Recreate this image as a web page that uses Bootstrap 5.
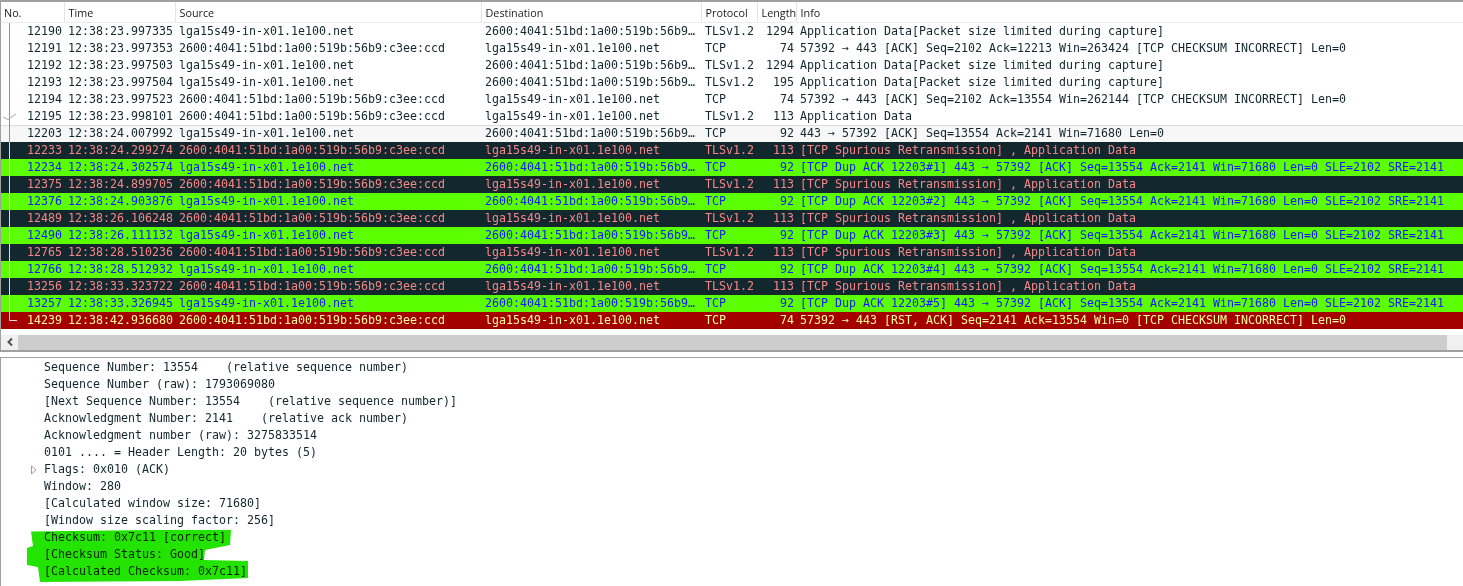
<!DOCTYPE html>
<html lang="en">
<head>
<meta charset="utf-8">
<title>Packet capture</title>
<link href="https://cdn.jsdelivr.net/npm/bootstrap@5.3.0/dist/css/bootstrap.min.css" rel="stylesheet">
<style>
html,body{height:100%;overflow:hidden;background:#fff}
body{font-family:"DejaVu Sans Mono",monospace;font-size:11.63px;color:#12272e}
.pane-list{position:relative;height:352px;border-top:2px solid #a0a0a0;border-left:1px solid #a0a0a0;border-bottom:2px solid #a0a0a0}
.pk-table{table-layout:fixed;border-collapse:collapse;width:1462px}
.pk-table th{height:20px;padding:2px 0 0 4px;font:400 10.8px "Open Sans",sans-serif;color:#1a1a1a;border-right:1px solid #e5e5e5;border-bottom:1px solid #e4ecf4;background:#fff;white-space:nowrap;overflow:hidden}
.pk-table th:first-child{padding-left:3px}
.pk-table td{height:17px;padding:0 0 0 4px;line-height:17px;white-space:pre;overflow:hidden;color:inherit}
.pk-table td.num{text-align:right;padding:0 2px 0 0}
.pk-table tr.r-sel td{background:#f7f7f7;box-shadow:inset 0 1px 0 #dcdcdc}
.pk-table tr.r-dark{background:#12272e;color:#f78787}
.pk-table tr.r-green{background:#5cff00;color:#1414ff}
.pk-table tr.r-red{background:#a40000;color:#fffc9c}
.tree-ov{position:absolute;left:0;top:0;pointer-events:none}
.scroll-h{height:15px;margin-top:6px;background:#f0f0f0}
.scroll-btn{width:17px;color:#505050}
.scroll-thumb{width:1429px;background:#cdcdcd}
.pane-detail{position:relative;margin-top:5px;height:229px;border-top:1px solid #a0a0a0;border-left:1px solid #a0a0a0;padding-top:1px}
.dt-row{height:17px;line-height:17px;padding-left:43px;white-space:pre;position:relative}
.dt-arrow{position:absolute;left:29px;top:4px}
.hl-ov{position:absolute;left:-1px;top:-358px;mix-blend-mode:multiply;pointer-events:none}
</style>
</head>
<body>
<div class="pane-list">
<table class="pk-table">
<colgroup><col style="width:63px"><col style="width:111px"><col style="width:306px"><col style="width:220px"><col style="width:56px"><col style="width:39px"><col style="width:667px"></colgroup>
<thead><tr><th>No.</th><th>Time</th><th>Source</th><th>Destination</th><th>Protocol</th><th>Length</th><th>Info</th></tr></thead>
<tbody>
<tr><td class="num">12190</td><td>12:38:23.997335</td><td>lga15s49-in-x01.1e100.net</td><td>2600:4041:51bd:1a00:519b:56b9…</td><td>TLSv1.2</td><td class="num">1294</td><td>Application Data[Packet size limited during capture]</td></tr>
<tr><td class="num">12191</td><td>12:38:23.997353</td><td>2600:4041:51bd:1a00:519b:56b9:c3ee:ccd</td><td>lga15s49-in-x01.1e100.net</td><td>TCP</td><td class="num">74</td><td>57392 → 443 [ACK] Seq=2102 Ack=12213 Win=263424 [TCP CHECKSUM INCORRECT] Len=0</td></tr>
<tr><td class="num">12192</td><td>12:38:23.997503</td><td>lga15s49-in-x01.1e100.net</td><td>2600:4041:51bd:1a00:519b:56b9…</td><td>TLSv1.2</td><td class="num">1294</td><td>Application Data[Packet size limited during capture]</td></tr>
<tr><td class="num">12193</td><td>12:38:23.997504</td><td>lga15s49-in-x01.1e100.net</td><td>2600:4041:51bd:1a00:519b:56b9…</td><td>TLSv1.2</td><td class="num">195</td><td>Application Data[Packet size limited during capture]</td></tr>
<tr><td class="num">12194</td><td>12:38:23.997523</td><td>2600:4041:51bd:1a00:519b:56b9:c3ee:ccd</td><td>lga15s49-in-x01.1e100.net</td><td>TCP</td><td class="num">74</td><td>57392 → 443 [ACK] Seq=2102 Ack=13554 Win=262144 [TCP CHECKSUM INCORRECT] Len=0</td></tr>
<tr><td class="num">12195</td><td>12:38:23.998101</td><td>2600:4041:51bd:1a00:519b:56b9:c3ee:ccd</td><td>lga15s49-in-x01.1e100.net</td><td>TLSv1.2</td><td class="num">113</td><td>Application Data</td></tr>
<tr class="r-sel"><td class="num">12203</td><td>12:38:24.007992</td><td>lga15s49-in-x01.1e100.net</td><td>2600:4041:51bd:1a00:519b:56b9…</td><td>TCP</td><td class="num">92</td><td>443 → 57392 [ACK] Seq=13554 Ack=2141 Win=71680 Len=0</td></tr>
<tr class="r-dark"><td class="num">12233</td><td>12:38:24.299274</td><td>2600:4041:51bd:1a00:519b:56b9:c3ee:ccd</td><td>lga15s49-in-x01.1e100.net</td><td>TLSv1.2</td><td class="num">113</td><td>[TCP Spurious Retransmission] , Application Data</td></tr>
<tr class="r-green"><td class="num">12234</td><td>12:38:24.302574</td><td>lga15s49-in-x01.1e100.net</td><td>2600:4041:51bd:1a00:519b:56b9…</td><td>TCP</td><td class="num">92</td><td>[TCP Dup ACK 12203#1] 443 → 57392 [ACK] Seq=13554 Ack=2141 Win=71680 Len=0 SLE=2102 SRE=2141</td></tr>
<tr class="r-dark"><td class="num">12375</td><td>12:38:24.899705</td><td>2600:4041:51bd:1a00:519b:56b9:c3ee:ccd</td><td>lga15s49-in-x01.1e100.net</td><td>TLSv1.2</td><td class="num">113</td><td>[TCP Spurious Retransmission] , Application Data</td></tr>
<tr class="r-green"><td class="num">12376</td><td>12:38:24.903876</td><td>lga15s49-in-x01.1e100.net</td><td>2600:4041:51bd:1a00:519b:56b9…</td><td>TCP</td><td class="num">92</td><td>[TCP Dup ACK 12203#2] 443 → 57392 [ACK] Seq=13554 Ack=2141 Win=71680 Len=0 SLE=2102 SRE=2141</td></tr>
<tr class="r-dark"><td class="num">12489</td><td>12:38:26.106248</td><td>2600:4041:51bd:1a00:519b:56b9:c3ee:ccd</td><td>lga15s49-in-x01.1e100.net</td><td>TLSv1.2</td><td class="num">113</td><td>[TCP Spurious Retransmission] , Application Data</td></tr>
<tr class="r-green"><td class="num">12490</td><td>12:38:26.111132</td><td>lga15s49-in-x01.1e100.net</td><td>2600:4041:51bd:1a00:519b:56b9…</td><td>TCP</td><td class="num">92</td><td>[TCP Dup ACK 12203#3] 443 → 57392 [ACK] Seq=13554 Ack=2141 Win=71680 Len=0 SLE=2102 SRE=2141</td></tr>
<tr class="r-dark"><td class="num">12765</td><td>12:38:28.510236</td><td>2600:4041:51bd:1a00:519b:56b9:c3ee:ccd</td><td>lga15s49-in-x01.1e100.net</td><td>TLSv1.2</td><td class="num">113</td><td>[TCP Spurious Retransmission] , Application Data</td></tr>
<tr class="r-green"><td class="num">12766</td><td>12:38:28.512932</td><td>lga15s49-in-x01.1e100.net</td><td>2600:4041:51bd:1a00:519b:56b9…</td><td>TCP</td><td class="num">92</td><td>[TCP Dup ACK 12203#4] 443 → 57392 [ACK] Seq=13554 Ack=2141 Win=71680 Len=0 SLE=2102 SRE=2141</td></tr>
<tr class="r-dark"><td class="num">13256</td><td>12:38:33.323722</td><td>2600:4041:51bd:1a00:519b:56b9:c3ee:ccd</td><td>lga15s49-in-x01.1e100.net</td><td>TLSv1.2</td><td class="num">113</td><td>[TCP Spurious Retransmission] , Application Data</td></tr>
<tr class="r-green"><td class="num">13257</td><td>12:38:33.326945</td><td>lga15s49-in-x01.1e100.net</td><td>2600:4041:51bd:1a00:519b:56b9…</td><td>TCP</td><td class="num">92</td><td>[TCP Dup ACK 12203#5] 443 → 57392 [ACK] Seq=13554 Ack=2141 Win=71680 Len=0 SLE=2102 SRE=2141</td></tr>
<tr class="r-red"><td class="num">14239</td><td>12:38:42.936680</td><td>2600:4041:51bd:1a00:519b:56b9:c3ee:ccd</td><td>lga15s49-in-x01.1e100.net</td><td>TCP</td><td class="num">74</td><td>57392 → 443 [RST, ACK] Seq=2141 Ack=13554 Win=0 [TCP CHECKSUM INCORRECT] Len=0</td></tr>
</tbody>
</table>
<svg class="tree-ov" width="24" height="330" viewBox="0 0 24 330" aria-hidden="true">
<g transform="translate(-1,-2)" fill="none">
<path d="M9.5 23V142" stroke="#909090"/>
<path d="M9.5 142V320.5H17" stroke="#fff" stroke-opacity=".85"/>
<path d="M3 117l5 2.5 8-5.5" stroke="#a8a8a8"/>
</g>
</svg>
<div class="scroll-h d-flex">
<div class="scroll-btn d-flex align-items-center justify-content-center">
<svg width="8" height="10" viewBox="0 0 8 10" aria-hidden="true"><path d="M6 1.5L2.5 5L6 8.5" fill="none" stroke="#505050" stroke-width="2"/></svg>
</div>
<div class="scroll-thumb"></div>
</div>
</div>
<div class="pane-detail">
<div class="dt-row">Sequence Number: 13554    (relative sequence number)</div>
<div class="dt-row">Sequence Number (raw): 1793069080</div>
<div class="dt-row">[Next Sequence Number: 13554    (relative sequence number)]</div>
<div class="dt-row">Acknowledgment Number: 2141    (relative ack number)</div>
<div class="dt-row">Acknowledgment number (raw): 3275833514</div>
<div class="dt-row">0101 .... = Header Length: 20 bytes (5)</div>
<div class="dt-row"><svg class="dt-arrow" width="7" height="10" viewBox="0 0 7 10" aria-hidden="true"><path d="M1.5 1v8L6 5z" fill="#fff" stroke="#a0a0a0"/></svg>Flags: 0x010 (ACK)</div>
<div class="dt-row">Window: 280</div>
<div class="dt-row">[Calculated window size: 71680]</div>
<div class="dt-row">[Window size scaling factor: 256]</div>
<div class="dt-row">Checksum: 0x7c11 [correct]</div>
<div class="dt-row">[Checksum Status: Good]</div>
<div class="dt-row">[Calculated Checksum: 0x7c11]</div>
<svg class="hl-ov" width="260" height="590" viewBox="0 0 260 590" aria-hidden="true"><path d="M31 531.5L150 530H231L230 545L205 550L204 560L248 561L248 578L180 581L40 582L38 567L27 565L27 548L33 546Z" fill="#22e400"/></svg>
</div>
<script src="https://cdn.jsdelivr.net/npm/bootstrap@5.3.0/dist/js/bootstrap.bundle.min.js"></script>
</body>
</html>
